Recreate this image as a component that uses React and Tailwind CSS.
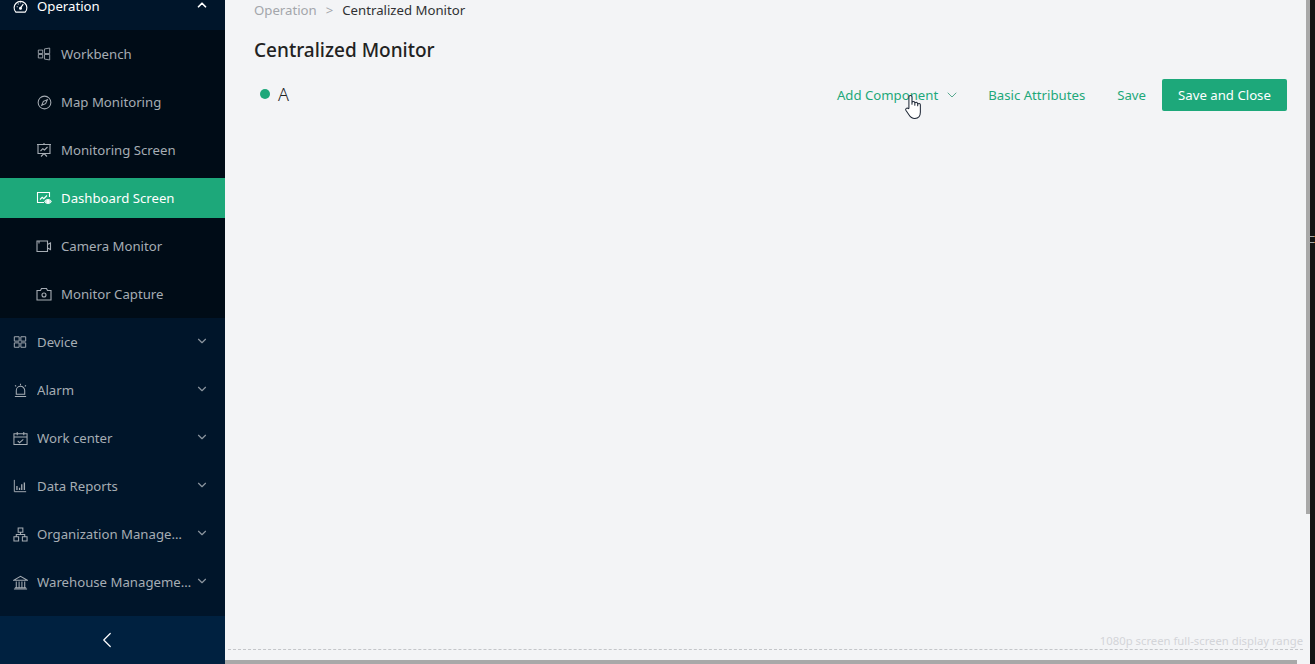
import React from 'react';
import { ChevronUp, ChevronDown, ChevronLeft } from 'lucide-react';

// hand drawn icons, the packages have nothing close enough for these
const Icon = ({ size = 16, sw = 1, children }) => (
  <svg width={size} height={size} viewBox="0 0 16 16" fill="none" stroke="currentColor" strokeWidth={sw}>
    {children}
  </svg>
);

const GaugeIcon = () => (
  <Icon size={15} sw={1.2}>
    <path d="M3 14h10a6.8 6.8 0 1 0-10 0z" />
    <path d="M8 9.5l3-4M4 8.2h1M5.2 5l.7.7M8 3.6v1" />
    <circle cx="8" cy="9.8" r="1" fill="currentColor" />
  </Icon>
);

const WorkbenchIcon = () => (
  <Icon size={14}>
    <path d="M1.5 3.500h5v4h-5zM1.5 8.500h5v4h-5zM8.500 2.200l6-1v6.300h-6zM8.500 8.500h6v6.300l-6-1z" />
  </Icon>
);

const CompassIcon = () => (
  <Icon size={15} sw={1.1}>
    <circle cx="8" cy="8" r="6.800" />
    <path d="M11 5L9.200 9.200 5 11l1.800-4.200z" />
  </Icon>
);

const ScreenIcon = () => (
  <Icon size={16} sw={1.1}>
    <path d="M1 2.500h14M2 2.500v9h12v-9M8 1v1.500M5 14.500l3-3 3 3" />
    <path d="M4.500 9l2.300-2.300 1.700 1.300 3-3" />
  </Icon>
);

const DashboardIcon = () => (
  <Icon size={16} sw={1.1}>
    <path d="M8 12.500H1.500v-10h12V7" />
    <path d="M4 9.500l2.200-2.200 1.600 1.400L11 5.500" />
    <circle cx="12" cy="11.500" r="1.300" fill="currentColor" />
    <path d="M8.800 11.500c1.800-2.600 4.600-2.600 6.400 0-1.800 2.600-4.600 2.600-6.400 0z" />
  </Icon>
);

const CameraMonitorIcon = () => (
  <Icon size={16} sw={1.1}>
    <path d="M1 3h10.500v10.500H1zM3 3v2.500M11.500 6.500l3-1.500v6.500l-3-1.500" />
  </Icon>
);

const CaptureIcon = () => (
  <Icon size={16} sw={1.1}>
    <path d="M1 4.500h3.500L5.500 2.500h5l1 2H15v9.500H1z" />
    <circle cx="8" cy="9" r="2" />
  </Icon>
);

const DeviceIcon = () => (
  <Icon size={14} sw={1.1}>
    <path d="M1.500 2h5.500v5H1.500zM9 2h5.500v5H9zM1.500 9h5.500v5H1.500zM9 9h5.500v5H9z" />
  </Icon>
);

const AlarmIcon = () => (
  <Icon size={15} sw={1.1}>
    <path d="M3.500 12V8a4.500 4.500 0 0 1 9 0v4zM2 14.500h12M8 .8v1.500M2.200 2.500l1.200 1.200M13.800 2.500l-1.200 1.200" />
  </Icon>
);

const CalendarIcon = () => (
  <Icon size={15} sw={1.1}>
    <path d="M1 3h14v11.500H1zM1 6.500h14M4.500 1v3.500M11.500 1v3.500M5 10.500l2 2 4-3.500" />
  </Icon>
);

const ReportIcon = () => (
  <Icon size={14} sw={1.1}>
    <path d="M1.500 1v13.500h13.500" />
    <path d="M4.500 8v4.500M7.500 10v2.500M10 6v6.500M13 4v8.500" strokeWidth="1.500" />
  </Icon>
);

const OrgIcon = () => (
  <Icon size={15} sw={1.1}>
    <path d="M5.500 1h5v4.500h-5zM1 10.500h5V15H1zM10 10.500h5V15h-5zM8 5.500V8M3.500 10.500V8h9v2.500" />
  </Icon>
);

const BankIcon = () => (
  <Icon size={15} sw={1.1}>
    <path d="M1 5.500L8 1.500l7 4zM3.500 7v6M6.500 7v6M9.500 7v6M12.500 7v6M2 13.500h12M1 15h14" />
  </Icon>
);

const subMenu = [
  { label: 'Workbench', icon: <WorkbenchIcon /> },
  { label: 'Map Monitoring', icon: <CompassIcon /> },
  { label: 'Monitoring Screen', icon: <ScreenIcon /> },
  { label: 'Dashboard Screen', icon: <DashboardIcon />, active: true },
  { label: 'Camera Monitor', icon: <CameraMonitorIcon /> },
  { label: 'Monitor Capture', icon: <CaptureIcon /> },
];

const menu = [
  { label: 'Device', icon: <DeviceIcon /> },
  { label: 'Alarm', icon: <AlarmIcon /> },
  { label: 'Work center', icon: <CalendarIcon /> },
  { label: 'Data Reports', icon: <ReportIcon /> },
  { label: 'Organization Management', icon: <OrgIcon /> },
  { label: 'Warehouse Management', icon: <BankIcon /> },
];

const HandCursor = () => (
  <svg className="absolute left-[904px] top-[95px]" width="18" height="24" viewBox="1.300 1 15.400 23.500" fill="#fff" stroke="#1b2433" strokeWidth="1" strokeLinejoin="round">
    <path d="M5 14V3a1.500 1.500 0 0 1 3 0v7-1.200a1.400 1.400 0 0 1 2.800 0V11 9.600a1.400 1.400 0 0 1 2.800 0V11.500 10.600a1.300 1.300 0 0 1 2.600 0V18c0 3.500-2 6-5.400 6-3 0-4.400-1.200-5.800-3.600L2 16c-.9-1.600 1.200-3 2.400-1.600z" />
  </svg>
);

export default function App() {
  return (
    <div className="relative flex h-screen w-full overflow-hidden bg-[#f3f4f6] font-['Noto_Sans',sans-serif]">
      {/* sidebar */}
      <aside className="flex h-full w-[225px] shrink-0 flex-col bg-[#00152a] text-[13.2px] text-[#a6adb4]">
        <div className="-mt-[18px] flex-1">
          <div className="flex h-12 items-center pl-3 pr-4 text-white">
            <span className="flex w-4 justify-center"><GaugeIcon /></span>
            <span className="ml-[9px] mt-[2px] flex-1">Operation</span>
            <ChevronUp size={14} strokeWidth={3} className="mb-[2px]" />
          </div>
          <div className="flex flex-col gap-2 bg-[#000c17] py-1">
            {subMenu.map((item) => (
              <div
                key={item.label}
                className={`flex h-10 items-center pl-9 ${item.active ? 'bg-[#1da87a] text-white' : ''}`}
              >
                <span className="flex w-4 justify-center">{item.icon}</span>
                <span className="ml-[9px] mt-[2px]">{item.label}</span>
              </div>
            ))}
          </div>
          {menu.map((item) => (
            <div key={item.label} className="flex h-12 items-center pl-3 pr-4">
              <span className="flex w-4 shrink-0 justify-center">{item.icon}</span>
              <span className="ml-[9px] mt-[2px] min-w-0 flex-1 truncate">{item.label}</span>
              <ChevronDown size={14} strokeWidth={2} className="mb-[2px] ml-[3px] shrink-0 text-[#8a949e]" />
            </div>
          ))}
        </div>
        <div className="flex h-12 items-center justify-center bg-[#002140] pr-[11px] text-white">
          <ChevronLeft size={26} strokeWidth={1.1} />
        </div>
      </aside>

      {/* main */}
      <main className="relative flex h-full min-w-0 flex-1 flex-col">
        <div className="flex h-5 items-center pl-[29px] pt-[2px] text-[13.2px]">
          <span className="text-[#a3a6ab]">Operation</span>
          <span className="mx-[9px] text-[#a3a6ab]">&gt;</span>
          <span className="text-[#303133]">Centralized Monitor</span>
        </div>
        <h1 className="mt-[15px] pl-[29px] text-[19px] leading-[30px] font-medium text-[#222]">Centralized Monitor</h1>
        <div className="mt-[14px] flex h-8 items-center pl-[35px] pr-[23px]">
          <span className="mb-[2px] h-[10px] w-[10px] rounded-full bg-[#1da87a]" />
          <span className="mb-[2px] ml-2 flex-1 text-lg font-light text-[#222]">A</span>
          <div className="flex items-center text-[13.2px] text-[#1da87a]">
            <span className="mt-[2px]">Add Component</span>
            <ChevronDown size={16} strokeWidth={1.3} className="ml-[6px] text-[#3f9c7f]" />
            <span className="ml-[28px] mt-[2px]">Basic Attributes</span>
            <span className="ml-[32px] mt-[2px]">Save</span>
            <button className="ml-4 h-8 w-[125px] rounded-[2px] bg-[#1da87a] pt-[2px] text-white">Save and Close</button>
          </div>
        </div>
        <div className="mt-auto">
          <div className="pr-[7px] text-right text-[11.3px] leading-4 text-[#d3d5d9]">1080p screen full-screen display range</div>
          <div className="mb-[10px] ml-[3px] mr-[7px] border-t border-dashed border-[#c4c6ca]" />
          <div className="mr-[13px] h-1 bg-[#a8a8a8]" />
        </div>
        {/* vertical scrollbar thumb */}
        <div className="absolute right-0 top-0 h-[514px] w-1 bg-[#a8a8a8]" />
      </main>

      {/* window edge */}
      <div className="flex w-[5px] shrink-0 flex-col bg-[#141414] pt-[236px]">
        <div className="h-px border-r border-[#c8803a] bg-[#a8a8a8]" />
        <div className="mt-[5px] h-px border-r border-[#c8803a] bg-[#a8a8a8]" />
      </div>

      <HandCursor />
    </div>
  );
}
